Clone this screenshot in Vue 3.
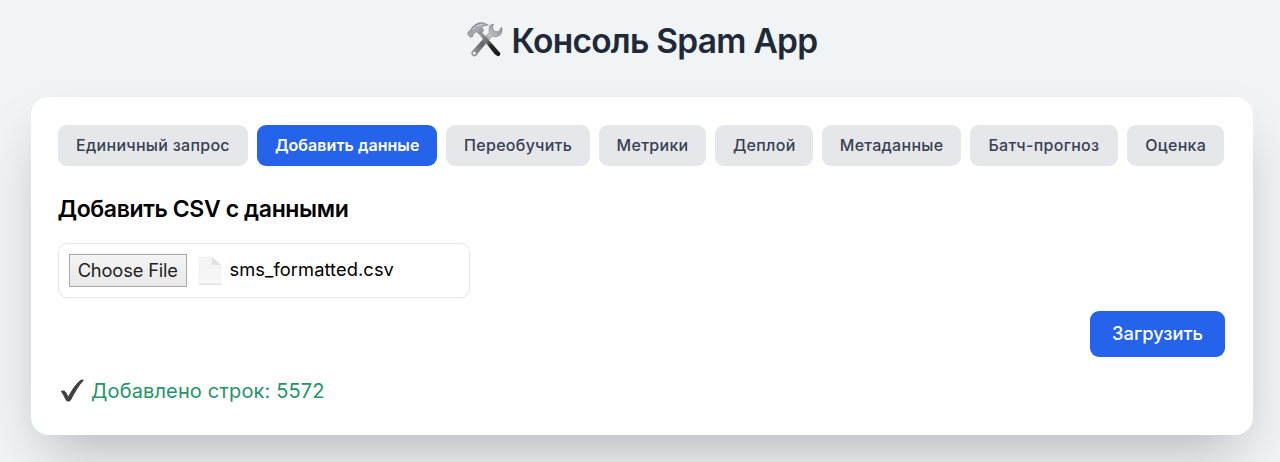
<script setup>
const tabs = [
  { label: 'Единичный запрос', width: 190 },
  { label: 'Добавить данные', width: 180, active: true },
  { label: 'Переобучить', width: 143.5 },
  { label: 'Метрики', width: 107 },
  { label: 'Деплой', width: 98 },
  { label: 'Метаданные', width: 138.3 },
  { label: 'Батч-прогноз', width: 148 },
  { label: 'Оценка', width: 97.2 },
]
</script>

<template>
  <div class="page">
    <h1 class="title">
      <svg class="tools" viewBox="0 0 36 38">
        <defs>
          <linearGradient id="steel" x1="0" y1="0" x2="1" y2="1">
            <stop offset="0" stop-color="#686c73" />
            <stop offset=".45" stop-color="#a9acb2" />
            <stop offset="1" stop-color="#65686e" />
          </linearGradient>
          <linearGradient id="shaft" x1="1" y1="0" x2="0" y2="1">
            <stop offset="0" stop-color="#82858b" />
            <stop offset=".4" stop-color="#c3c5c9" />
            <stop offset=".62" stop-color="#5d6066" />
            <stop offset="1" stop-color="#a5a8ad" />
          </linearGradient>
          <linearGradient id="grip" x1="0" y1="0" x2="1" y2="1">
            <stop offset="0" stop-color="#b0b2b5" />
            <stop offset=".42" stop-color="#65686c" />
            <stop offset=".58" stop-color="#26282b" />
            <stop offset="1" stop-color="#141619" />
          </linearGradient>
        </defs>
        <path d="M26.5 3 Q22.2 3.5 21.9 8 L22.3 11.5 L5 30.5 Q3.8 34.5 7.3 35.2 Q9.7 35 10.4 32.5 L25 15.3 Q31 17 34.3 12.5 Q35.8 9.5 34.6 6 L31.5 10.8 L27.2 10.2 L25.5 6.8Z" fill="url(#shaft)" stroke="#74777d" stroke-width=".5" />
        <circle cx="7.3" cy="32.2" r="1.4" fill="#eef1f2" />
        <path d="M13.5 9.5 L33.2 32 Q33.7 35 30.8 35.3 L27.5 33 L11.5 12.5Z" fill="url(#grip)" />
        <path d="M1 11.2 L3 9.5 Q6 4 11 2 Q17 .3 21.5 4.2 Q16.5 4 15 6.5 L16.8 9.5 L13 13.4 L9.3 10.8 L6.2 13.3 L5.8 15.5 L3.5 16.5 L.6 13.5Z" fill="url(#steel)" stroke="#75797f" stroke-width=".5" />
        <path d="M5.5 8.5 Q9.5 3.7 15.5 3.4" fill="none" stroke="#e0e2e5" stroke-width="1" />
      </svg>
      <span class="name">Консоль Spam App</span>
    </h1>

    <main class="card">
      <nav class="tabs">
        <button
          v-for="tab in tabs"
          :key="tab.label"
          class="tab"
          :class="{ active: tab.active }"
          :style="{ width: tab.width + 'px' }"
        >{{ tab.label }}</button>
      </nav>

      <h2 class="heading">Добавить CSV с данными</h2>

      <div class="file">
        <span class="choose">Choose File</span>
        <svg class="doc" viewBox="0 0 24 30">
          <defs>
            <linearGradient id="paper" x1="0" y1="0" x2="0" y2="1">
              <stop offset="0" stop-color="#f4f4f4" />
              <stop offset="1" stop-color="#f8f8f8" />
            </linearGradient>
          </defs>
          <path d="M1 1H14L23 9V28H1Z" fill="url(#paper)" stroke="#efefef" stroke-width=".6" />
          <path d="M14 1V9H23Z" fill="#e2e2e2" />
          <path d="M1 28.3H23" stroke="#dadada" />
        </svg>
        <span class="filename">sms_formatted.csv</span>
      </div>

      <div class="actions">
        <button class="upload">Загрузить</button>
      </div>

      <p class="status">
        <svg class="check" viewBox="0 0 26 24">
          <path d="M.8 12.6 Q1.7 11 4.3 11.6 Q6.5 13.2 8.1 17.6 Q14 6.2 20.2 1.2 Q22 .2 23.6 .8 Q23.8 1.6 22.7 2.4 Q17 9 11 21 Q9.5 23.2 7 22.4 Q5.2 20.5 3.8 17.3 Q2.3 14.3 .8 12.6Z" fill="#414141" />
        </svg>
        <span>Добавлено строк: 5572</span>
      </p>
    </main>
  </div>
</template>

<style>
body {
  margin: 0;
  overflow: hidden;
  background: #f0f4f5;
}
</style>

<style scoped>
.page {
  box-sizing: border-box;
  height: 462px;
  padding: 19px 27.5px 0 30.5px;
  overflow: hidden;
  background: #f0f4f5;
  font-family: Inter, "Noto Sans", sans-serif;
}
.title {
  display: flex;
  align-items: center;
  height: 46px;
  margin: 0 0 32px;
  padding-left: 436px;
  color: #1f2937;
  font-size: 33.5px;
  font-weight: 600;
  letter-spacing: -0.75px;
  white-space: nowrap;
}
.name {
  padding-bottom: 2px;
}
.tools {
  width: 36px;
  height: 38px;
  margin: -5px 9px 0 0;
}
.card {
  box-sizing: border-box;
  height: 337.5px;
  padding: 27.5px;
  border-radius: 18px;
  background: #fff;
  box-shadow: 0 28px 57px -14px rgba(0, 0, 0, 0.25);
}
.tabs {
  display: flex;
  gap: 9.2px;
}
.tab {
  flex: none;
  height: 41px;
  padding: 0;
  border: 0;
  border-radius: 9px;
  background: #e5e7eb;
  color: #374151;
  font: 500 16px Inter, "Noto Sans", sans-serif;
  letter-spacing: 0.28px;
  white-space: nowrap;
}
.tab.active {
  background: #2563eb;
  color: #fff;
  font-weight: 600;
  letter-spacing: 0.05px;
}
.heading {
  margin: 26.5px 0 0 -0.5px;
  color: #000;
  font-size: 23px;
  font-weight: 600;
  line-height: 34px;
  letter-spacing: -0.38px;
}
.file {
  display: flex;
  align-items: center;
  box-sizing: border-box;
  width: 412px;
  height: 54.5px;
  margin-top: 17px;
  padding: 0 9.5px;
  border: 1.2px solid #e5e7eb;
  border-radius: 9px;
  font-size: 18.3px;
}
.choose {
  box-sizing: border-box;
  width: 118.5px;
  height: 33.5px;
  border: 1px solid #a9a9a9;
  background: linear-gradient(#f4f4f4, #e9e9e9);
  color: #222;
  line-height: 30px;
  letter-spacing: -0.15px;
  text-align: center;
}
.doc {
  width: 24px;
  height: 30px;
  margin: 1px 7.5px 0 11px;
}
.filename {
  padding-bottom: 3px;
  color: #000;
  letter-spacing: 0.08px;
}
.actions {
  display: flex;
  justify-content: flex-end;
  margin-top: 13.5px;
}
.upload {
  width: 135px;
  height: 45.5px;
  padding: 0 0 1px;
  border: 0;
  border-radius: 9px;
  background: #2563eb;
  color: #fff;
  font: 500 18.3px Inter, "Noto Sans", sans-serif;
}
.status {
  display: flex;
  align-items: center;
  height: 28px;
  margin: 20px 0 0;
  color: #249567;
  font-size: 20px;
  letter-spacing: 0.14px;
}
.check {
  width: 26px;
  height: 24px;
  margin: 0 5px 0 2px;
}
</style>
